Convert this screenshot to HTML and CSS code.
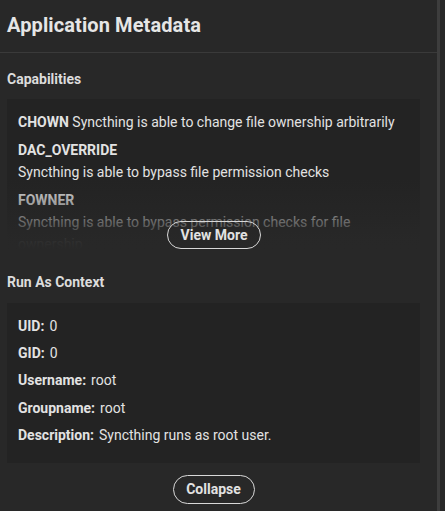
FILE: index.html
```html
<!DOCTYPE html>
<html>
<head>
<meta charset="utf-8">
<link rel="stylesheet" href="styles.css">
</head>
<body>
<div class="panel">
  <header class="header">
    <h1 class="title">Application Metadata</h1>
  </header>
  <main class="content">
    <h2 class="section-title">Capabilities</h2>
    <div class="cap-wrap">
      <div class="card cap-card">
        <div class="cap"><span class="cap-name">CHOWN</span> <span class="cap-desc">Syncthing is able to change file ownership arbitrarily</span></div>
        <div class="cap"><span class="cap-name">DAC_OVERRIDE</span> <span class="cap-desc">Syncthing is able to bypass file permission checks</span></div>
        <div class="cap"><span class="cap-name">FOWNER</span> <span class="cap-desc">Syncthing is able to bypass permission checks for file ownership</span></div>
      </div>
      <div class="fade"></div>
      <button class="pill more-btn">View More</button>
    </div>
    <h2 class="section-title run-title">Run As Context</h2>
    <div class="card ctx-card">
      <div class="row"><span class="label">UID:</span><span class="value">0</span></div>
      <div class="row"><span class="label">GID:</span><span class="value">0</span></div>
      <div class="row"><span class="label">Username:</span><span class="value">root</span></div>
      <div class="row"><span class="label">Groupname:</span><span class="value">root</span></div>
      <div class="row"><span class="label">Description:</span><span class="value">Syncthing runs as root user.</span></div>
    </div>
    <div class="actions">
      <button class="pill collapse-btn">Collapse</button>
    </div>
  </main>
</div>
</body>
</html>
```

FILE: styles.css
```css
* { box-sizing: border-box; }
html, body {
  margin: 0;
  padding: 0;
  background: #282828;
  height: 511px;
  overflow: hidden;
}
body {
  font-family: Roboto, "Liberation Sans", sans-serif;
  color: #e2e2e2;
  font-size: 14px;
}
.panel {
  width: 440px;
  height: 511px;
  border-right: 3px solid #3d3d3d;
}
.header {
  height: 53px;
  padding: 12px 7px 0;
  border-bottom: 1px solid #3a3a3a;
}
.title {
  margin: 0;
  font-size: 20px;
  line-height: 26px;
  font-weight: 700;
  color: #e6e6e6;
  letter-spacing: 0.1px;
}
.content {
  padding: 0 17px 0 7px;
}
.section-title {
  margin: 16px 0 0;
  font-size: 14px;
  line-height: 20px;
  font-weight: 700;
  color: #dcdcdc;
}
.cap-wrap {
  position: relative;
  margin-top: 10px;
  height: 155px;
}
.card {
  background: #232323;
}
.cap-card {
  height: 155px;
  overflow: hidden;
  padding: 12px 11px 0;
}
.cap {
  line-height: 22px;
  margin-bottom: 6px;
}
.cap-name {
  font-weight: 700;
  display: inline-block;
}
.cap-desc {
  display: inline-block;
}
.fade {
  position: absolute;
  left: 0;
  right: 0;
  top: 0;
  bottom: 0;
  background: linear-gradient(to bottom, rgba(40,40,40,0) 0px, rgba(40,40,40,0) 80px, rgba(40,40,40,0.62) 122px, rgba(40,40,40,0.95) 140px, #282828 150px);
}
.pill {
  font-family: Roboto, "Liberation Sans", sans-serif;
  font-weight: 700;
  font-size: 14px;
  color: #e2e2e2;
  background: transparent;
  border: 1px solid #d8d8d8;
  border-radius: 15px;
  padding: 0;
  line-height: 26px;
  cursor: pointer;
}
.more-btn {
  position: absolute;
  top: 122px;
  left: 160px;
  width: 94px;
  height: 28px;
}
.run-title {
  margin-top: 18px;
}
.ctx-card {
  margin-top: 11px;
  height: 160px;
  padding: 13px 11px 0;
  display: grid;
  grid-auto-rows: 20px;
  row-gap: 7.2px;
  align-content: start;
}
.row {
  line-height: 20px;
  display: flex;
  gap: 5px;
}
.label {
  font-weight: 700;
}
.actions {
  display: flex;
  justify-content: center;
  margin-top: 12px;
}
.collapse-btn {
  width: 82px;
  height: 29px;
  line-height: 27px;
}
```
